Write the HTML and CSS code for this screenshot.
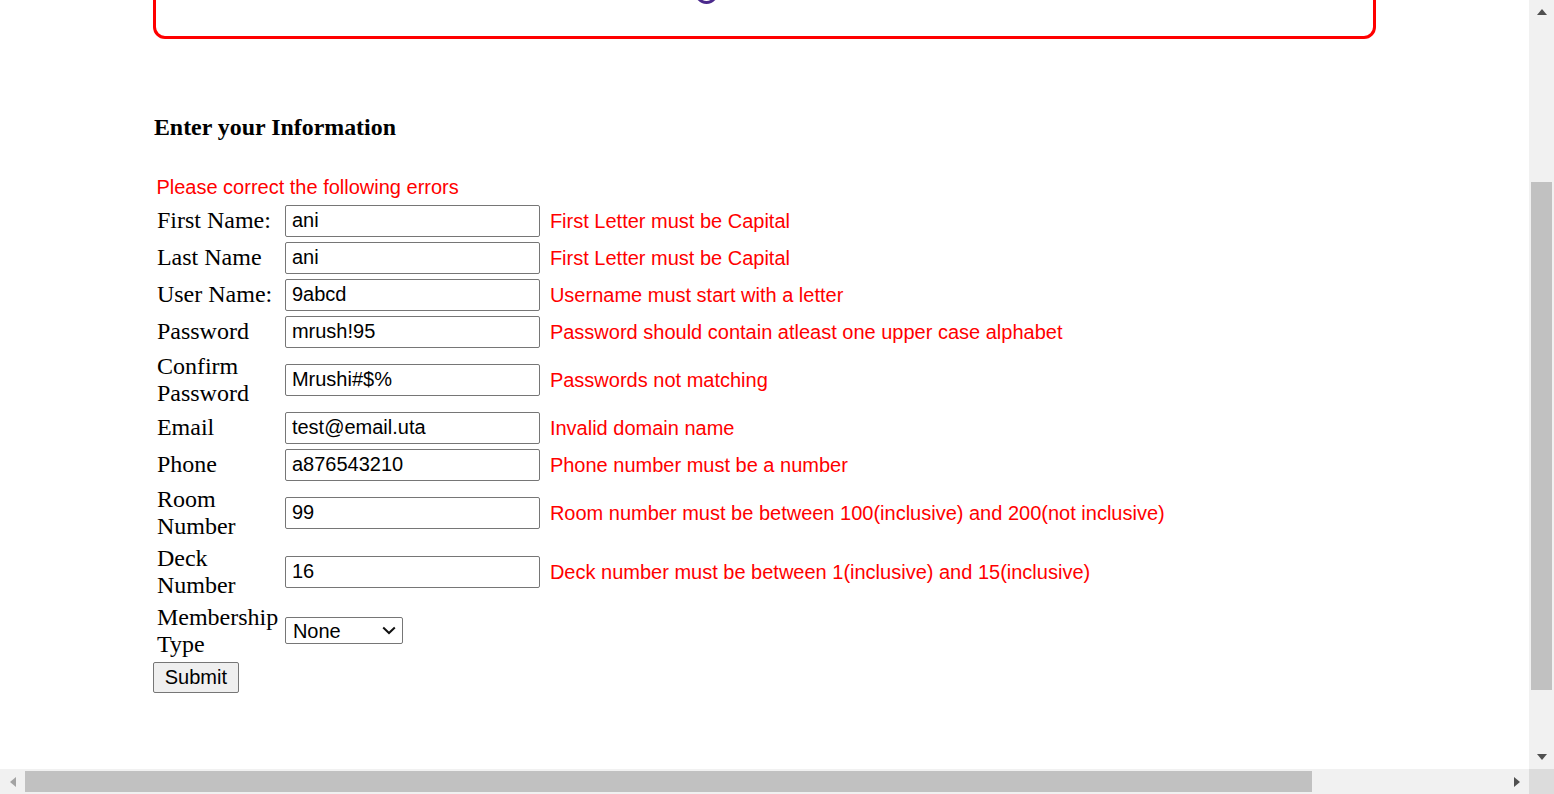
FILE: index.html
```html
<!DOCTYPE html>
<html lang="en">
<head>
<meta charset="utf-8">
<title>Enter your Information</title>
<link rel="stylesheet" href="styles.css">
</head>
<body>
<div class="frame">
  <div class="viewport">
    <div class="container">
      <div class="banner"><span class="banner-glyph"></span></div>
      <h3 class="title">Enter your Information</h3>
      <form class="info-form">
        <table class="form-table">
          <tr><td colspan="3" class="summary">Please correct the following errors</td></tr>
          <tr><td class="lbl">First Name:</td><td class="fld"><input class="txt" type="text" value="ani"></td><td class="err">First Letter must be Capital</td></tr>
          <tr><td class="lbl">Last Name</td><td class="fld"><input class="txt" type="text" value="ani"></td><td class="err">First Letter must be Capital</td></tr>
          <tr><td class="lbl">User Name:</td><td class="fld"><input class="txt" type="text" value="9abcd"></td><td class="err">Username must start with a letter</td></tr>
          <tr><td class="lbl">Password</td><td class="fld"><input class="txt" type="text" value="mrush!95"></td><td class="err">Password should contain atleast one upper case alphabet</td></tr>
          <tr><td class="lbl">Confirm Password</td><td class="fld"><input class="txt" type="text" value="Mrushi#$%"></td><td class="err">Passwords not matching</td></tr>
          <tr><td class="lbl">Email</td><td class="fld"><input class="txt" type="text" value="test@email.uta"></td><td class="err">Invalid domain name</td></tr>
          <tr><td class="lbl">Phone</td><td class="fld"><input class="txt" type="text" value="a876543210"></td><td class="err">Phone number must be a number</td></tr>
          <tr><td class="lbl">Room Number</td><td class="fld"><input class="txt" type="text" value="99"></td><td class="err">Room number must be between 100(inclusive) and 200(not inclusive)</td></tr>
          <tr><td class="lbl">Deck Number</td><td class="fld"><input class="txt" type="text" value="16"></td><td class="err">Deck number must be between 1(inclusive) and 15(inclusive)</td></tr>
          <tr><td class="lbl">Membership Type</td><td class="fld">
            <span class="select-wrap">
              <select class="sel"><option>None</option><option>Silver</option><option>Gold</option></select>
              <svg class="chev" width="14" height="9" viewBox="0 0 14 9"><path d="M1.2 1.5 L7 7 L12.8 1.5" fill="none" stroke="#111" stroke-width="2"/></svg>
            </span>
          </td><td class="err"></td></tr>
        </table>
        <button class="submit" type="button">Submit</button>
      </form>
    </div>
  </div>
  <div class="vscroll">
    <div class="sb-btn"><span class="arr arr-up"></span></div>
    <div class="vspace-top"></div>
    <div class="vthumb"></div>
    <div class="vspace-bot"></div>
    <div class="sb-btn"><span class="arr arr-down"></span></div>
  </div>
  <div class="hscroll">
    <div class="sb-btn"><span class="arr arr-left"></span></div>
    <div class="hthumb"></div>
    <div class="hspace"></div>
    <div class="sb-btn"><span class="arr arr-right"></span></div>
  </div>
  <div class="corner"></div>
</div>
</body>
</html>
```
FILE: styles.css
```css
html, body {
  margin: 0;
  padding: 0;
  overflow: hidden;
  background: #ffffff;
}

.frame {
  width: 1554px;
  height: 794px;
  display: grid;
  grid-template-columns: 1529px 25px;
  grid-template-rows: 769px 25px;
}

.viewport {
  overflow: hidden;
  background: #ffffff;
}

.container {
  width: 80%;
  margin: 0 auto;
}

.banner {
  box-sizing: content-box;
  height: 62px;
  margin-top: -61px;
  border: 3px solid #ff0000;
  border-radius: 12px;
  display: flex;
  align-items: flex-end;
  padding: 0 0 32px 538px;
}

.banner-glyph {
  display: block;
  width: 19px;
  height: 22px;
  border: 3px solid #4b2a8c;
  border-top-color: transparent;
  border-radius: 50%;
}

.title {
  font-family: "Liberation Serif", "Times New Roman", serif;
  font-weight: bold;
  font-size: 23.9px;
  line-height: 27px;
  color: #000;
  margin: 74.6px 0 33.9px 1px;
}

.info-form {
  margin: 0;
}

.form-table {
  border-spacing: 0;
  border-collapse: separate;
}

.form-table td {
  padding: 2.5px 0;
  vertical-align: middle;
}

.form-table td.summary {
  font-family: "Liberation Sans", Arial, sans-serif;
  font-size: 20px;
  line-height: 23px;
  color: #ff0000;
  padding: 1.5px 0 3.5px 3.5px;
}

.form-table td.lbl {
  font-family: "Liberation Serif", "Times New Roman", serif;
  font-size: 24px;
  line-height: 27px;
  color: #000;
  width: 128px;
  padding-left: 4px;
}

.txt {
  display: block;
  box-sizing: border-box;
  width: 255px;
  height: 32px;
  margin: 0;
  padding: 0 6px;
  border: 1px solid #767676;
  border-radius: 2px;
  font-family: "Liberation Sans", Arial, sans-serif;
  font-size: 20px;
  color: #000;
  background: #fff;
  outline: none;
}

.form-table td.err {
  font-family: "Liberation Sans", Arial, sans-serif;
  font-size: 20px;
  line-height: 23px;
  color: #ff0000;
  white-space: nowrap;
  padding: 3.5px 0 1.5px 10px;
}

.select-wrap {
  position: relative;
  display: block;
  width: 118px;
}

.sel {
  display: block;
  appearance: none;
  -webkit-appearance: none;
  box-sizing: border-box;
  width: 118px;
  height: 27px;
  margin: 0;
  padding: 0 0 0 7px;
  border: 1px solid #767676;
  border-radius: 2px;
  background: #fff;
  font-family: "Liberation Sans", Arial, sans-serif;
  font-size: 20px;
  color: #000;
  outline: none;
}

.chev {
  position: absolute;
  right: 7px;
  top: 9px;
  pointer-events: none;
}

.submit {
  display: block;
  box-sizing: border-box;
  width: 86px;
  height: 31px;
  margin: 1.5px 0 0 0;
  padding: 0;
  border: 1px solid #767676;
  border-radius: 2px;
  background: #efefef;
  font-family: "Liberation Sans", Arial, sans-serif;
  font-size: 20px;
  color: #000;
}

/* scrollbars */
.vscroll {
  background: #f1f1f1;
  display: flex;
  flex-direction: column;
}

.hscroll {
  background: #f1f1f1;
  display: flex;
  flex-direction: row;
}

.corner {
  background: #dcdcdc;
}

.sb-btn {
  flex: 0 0 25px;
  height: 25px;
  width: 25px;
  display: flex;
  align-items: center;
  justify-content: center;
}

.vspace-top {
  flex: 0 0 157px;
}

.vthumb {
  flex: 0 0 508px;
  margin: 0 2px 0 2px;
  background: #c1c1c1;
}

.vspace-bot {
  flex: 1 1 auto;
}

.hthumb {
  flex: 0 0 1287px;
  margin: 2px 0 2px 0;
  background: #c1c1c1;
}

.hspace {
  flex: 1 1 auto;
}

.arr {
  width: 0;
  height: 0;
  display: block;
}

.arr-up {
  border-left: 5.5px solid transparent;
  border-right: 5.5px solid transparent;
  border-bottom: 6px solid #505050;
  margin-top: -1px;
}

.arr-down {
  border-left: 5.5px solid transparent;
  border-right: 5.5px solid transparent;
  border-top: 6px solid #505050;
}

.arr-left {
  border-top: 5.5px solid transparent;
  border-bottom: 5.5px solid transparent;
  border-right: 6px solid #a3a3a3;
}

.arr-right {
  border-top: 5.5px solid transparent;
  border-bottom: 5.5px solid transparent;
  border-left: 6px solid #505050;
}
```
